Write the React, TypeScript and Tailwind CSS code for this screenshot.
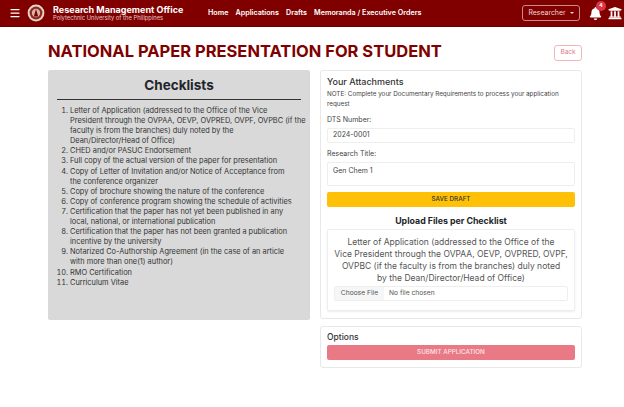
import React from "react";
import { Menu } from "lucide-react";
import { FaBell, FaUniversity } from "react-icons/fa";

const items = [
  "Letter of Application (addressed to the Office of the Vice\nPresident through the OVPAA, OEVP, OVPRED, OVPF, OVPBC (if the\nfaculty is from the branches) duly noted by the\nDean/Director/Head of Office)",
  "CHED and/or PASUC Endorsement",
  "Full copy of the actual version of the paper for presentation",
  "Copy of Letter of Invitation and/or Notice of Acceptance from\nthe conference organizer",
  "Copy of brochure showing the nature of the conference",
  "Copy of conference program showing the schedule of activities",
  "Certification that the paper has not yet been published in any\nlocal, national, or international publication",
  "Certification that the paper has not been granted a publication\nincentive by the university",
  "Notarized Co-Authorship Agreement (in the case of an article\nwith more than one(1) author)",
  "RMO Certification",
  "Curriculum Vitae",
];

export default function App() {
  return (
    <div className="w-[624px] h-[407px] overflow-hidden bg-white font-['Inter','Open_Sans',sans-serif] text-[#333]">
      <nav className="h-[27px] bg-[#800000] flex items-center pl-[9px] pr-[2px] text-white border-b border-[#6f0000]">
        <Menu size={12} strokeWidth={2.5} />
        <svg width="18" height="18" viewBox="0 0 18 18" className="ml-[6px]">
          <circle cx="9" cy="9" r="8.4" fill="#e8d3c8" />
          <circle cx="9" cy="9" r="6.4" fill="#8a2a22" />
          <circle cx="9" cy="9" r="4.2" fill="#d9b7a8" />
          <path d="M6.8 12.5 L9 5 L11.2 12.5 Z" fill="#800000" />
        </svg>
        <div className="ml-[8px] w-[146px] leading-none">
          <div className="text-[9px] font-bold leading-[9px] whitespace-nowrap">Research Management Office</div>
          <div className="text-[5.8px] leading-[7px] text-[#e8c9c9] whitespace-nowrap">Polytechnic University of the Philippines</div>
        </div>
        <div className="ml-[9px] flex gap-[7px] text-[7.2px] font-semibold whitespace-nowrap">
          <span>Home</span>
          <span>Applications</span>
          <span>Drafts</span>
          <span>Memoranda / Executive Orders</span>
        </div>
        <button className="ml-auto w-[58px] h-[16px] border border-[#c98a8a] rounded-[3px] text-[6.9px] text-[#f0d8d8] flex items-center justify-center gap-[4px]">
          Researcher
          <span className="w-0 h-0 border-x-[2px] border-x-transparent border-t-[2px] border-t-[#f0d8d8]" />
        </button>
        <div className="relative ml-[9px]">
          <FaBell size={13} />
          <span className="absolute -top-[6px] left-[7px] w-[10px] h-[10px] rounded-full bg-[#dc3545] text-[5px] font-bold flex items-center justify-center">4</span>
        </div>
        <FaUniversity size={14} className="ml-[6px]" />
      </nav>

      <div className="pl-[48px] pr-[42px]">
        <div className="flex items-start justify-between pt-[16px] h-[43px]">
          <h1 className="text-[16.5px] font-bold leading-[17px] text-[#800000] whitespace-nowrap">NATIONAL PAPER PRESENTATION FOR STUDENT</h1>
          <button className="block mt-[2px] w-[28px] h-[16px] border border-[#f0b4bb] rounded-[3px] text-[6.5px] text-[#e57b87]">Back</button>
        </div>

        <div className="flex gap-[10px]">
          <section className="w-[262px] h-[250px] bg-[#d9d9d9] rounded-[2px] px-[9px] pt-[7px]">
            <h2 className="text-[13.5px] font-bold text-[#212529] text-center leading-[17px] pb-[5px] border-b border-[#333] mb-[6px]">Checklists</h2>
            <ol className="list-decimal pl-[13px] text-[7.4px] leading-[10.1px] text-[#333]">
              {items.map((t) => (
                <li key={t} className="whitespace-pre">{t}</li>
              ))}
            </ol>
          </section>

          <div className="w-[262px] flex flex-col gap-[7px]">
            <section className="h-[249px] border border-[#e8e8e8] rounded-[3px] px-[6px] pt-[5px]">
              <h3 className="text-[9px] font-medium leading-[12px] text-[#333]">Your Attachments</h3>
              <p className="mt-[2px] text-[6.3px] leading-[9.5px] text-[#444]">NOTE: Complete your Documentary Requirements to process your application request</p>
              <div className="mt-[6px] text-[7px] leading-[10px] text-[#444]">DTS Number:</div>
              <div className="mt-[3px] h-[15px] border border-[#eeeeee] rounded-[2px] px-[5px] flex items-center text-[7px] text-[#444]">2024-0001</div>
              <div className="mt-[6px] text-[7px] leading-[10px] text-[#444]">Research Title:</div>
              <div className="mt-[3px] h-[24px] border border-[#eeeeee] rounded-[2px] px-[5px] pt-[3px] text-[7px] leading-[9px] text-[#444]">Gen Chem 1</div>
              <button className="block mt-[6px] w-full h-[15px] bg-[#ffc107] rounded-[2px] text-[6.3px] font-medium text-[#333]">SAVE DRAFT</button>
              <h4 className="mt-[8px] text-[8.8px] font-bold leading-[12px] text-center text-[#212529]">Upload Files per Checklist</h4>
              <div className="mt-[2px] h-[82px] border border-[#eeeeee] rounded-[2px] shadow-[0_1px_2px_rgba(0,0,0,0.08)] px-[3px] pt-[6px]">
                <p className="text-[8.5px] leading-[12px] text-center text-[#555]">
                  Letter of Application (addressed to the Office of the<br />
                  Vice President through the OVPAA, OEVP, OVPRED, OVPF,<br />
                  OVPBC (if the faculty is from the branches) duly noted<br />
                  by the Dean/Director/Head of Office)
                </p>
                <div className="mt-[2px] mx-[3px] h-[15px] border border-[#eeeeee] rounded-[2px] flex items-center text-[6.7px] text-[#555]">
                  <span className="h-full w-[49px] bg-[#f6f6f7] flex items-center justify-center">Choose File</span>
                  <span className="ml-[5px]">No file chosen</span>
                </div>
              </div>
            </section>
            <section className="h-[42px] border border-[#e8e8e8] rounded-[3px] px-[6px] pt-[4px]">
              <h3 className="text-[8.5px] font-medium leading-[12px] text-[#333]">Options</h3>
              <button className="block mt-[2px] w-full h-[15px] bg-[#e97a85] rounded-[2px] text-[6.3px] font-medium text-[#fbe4e6]">SUBMIT APPLICATION</button>
            </section>
          </div>
        </div>
      </div>
    </div>
  );
}
